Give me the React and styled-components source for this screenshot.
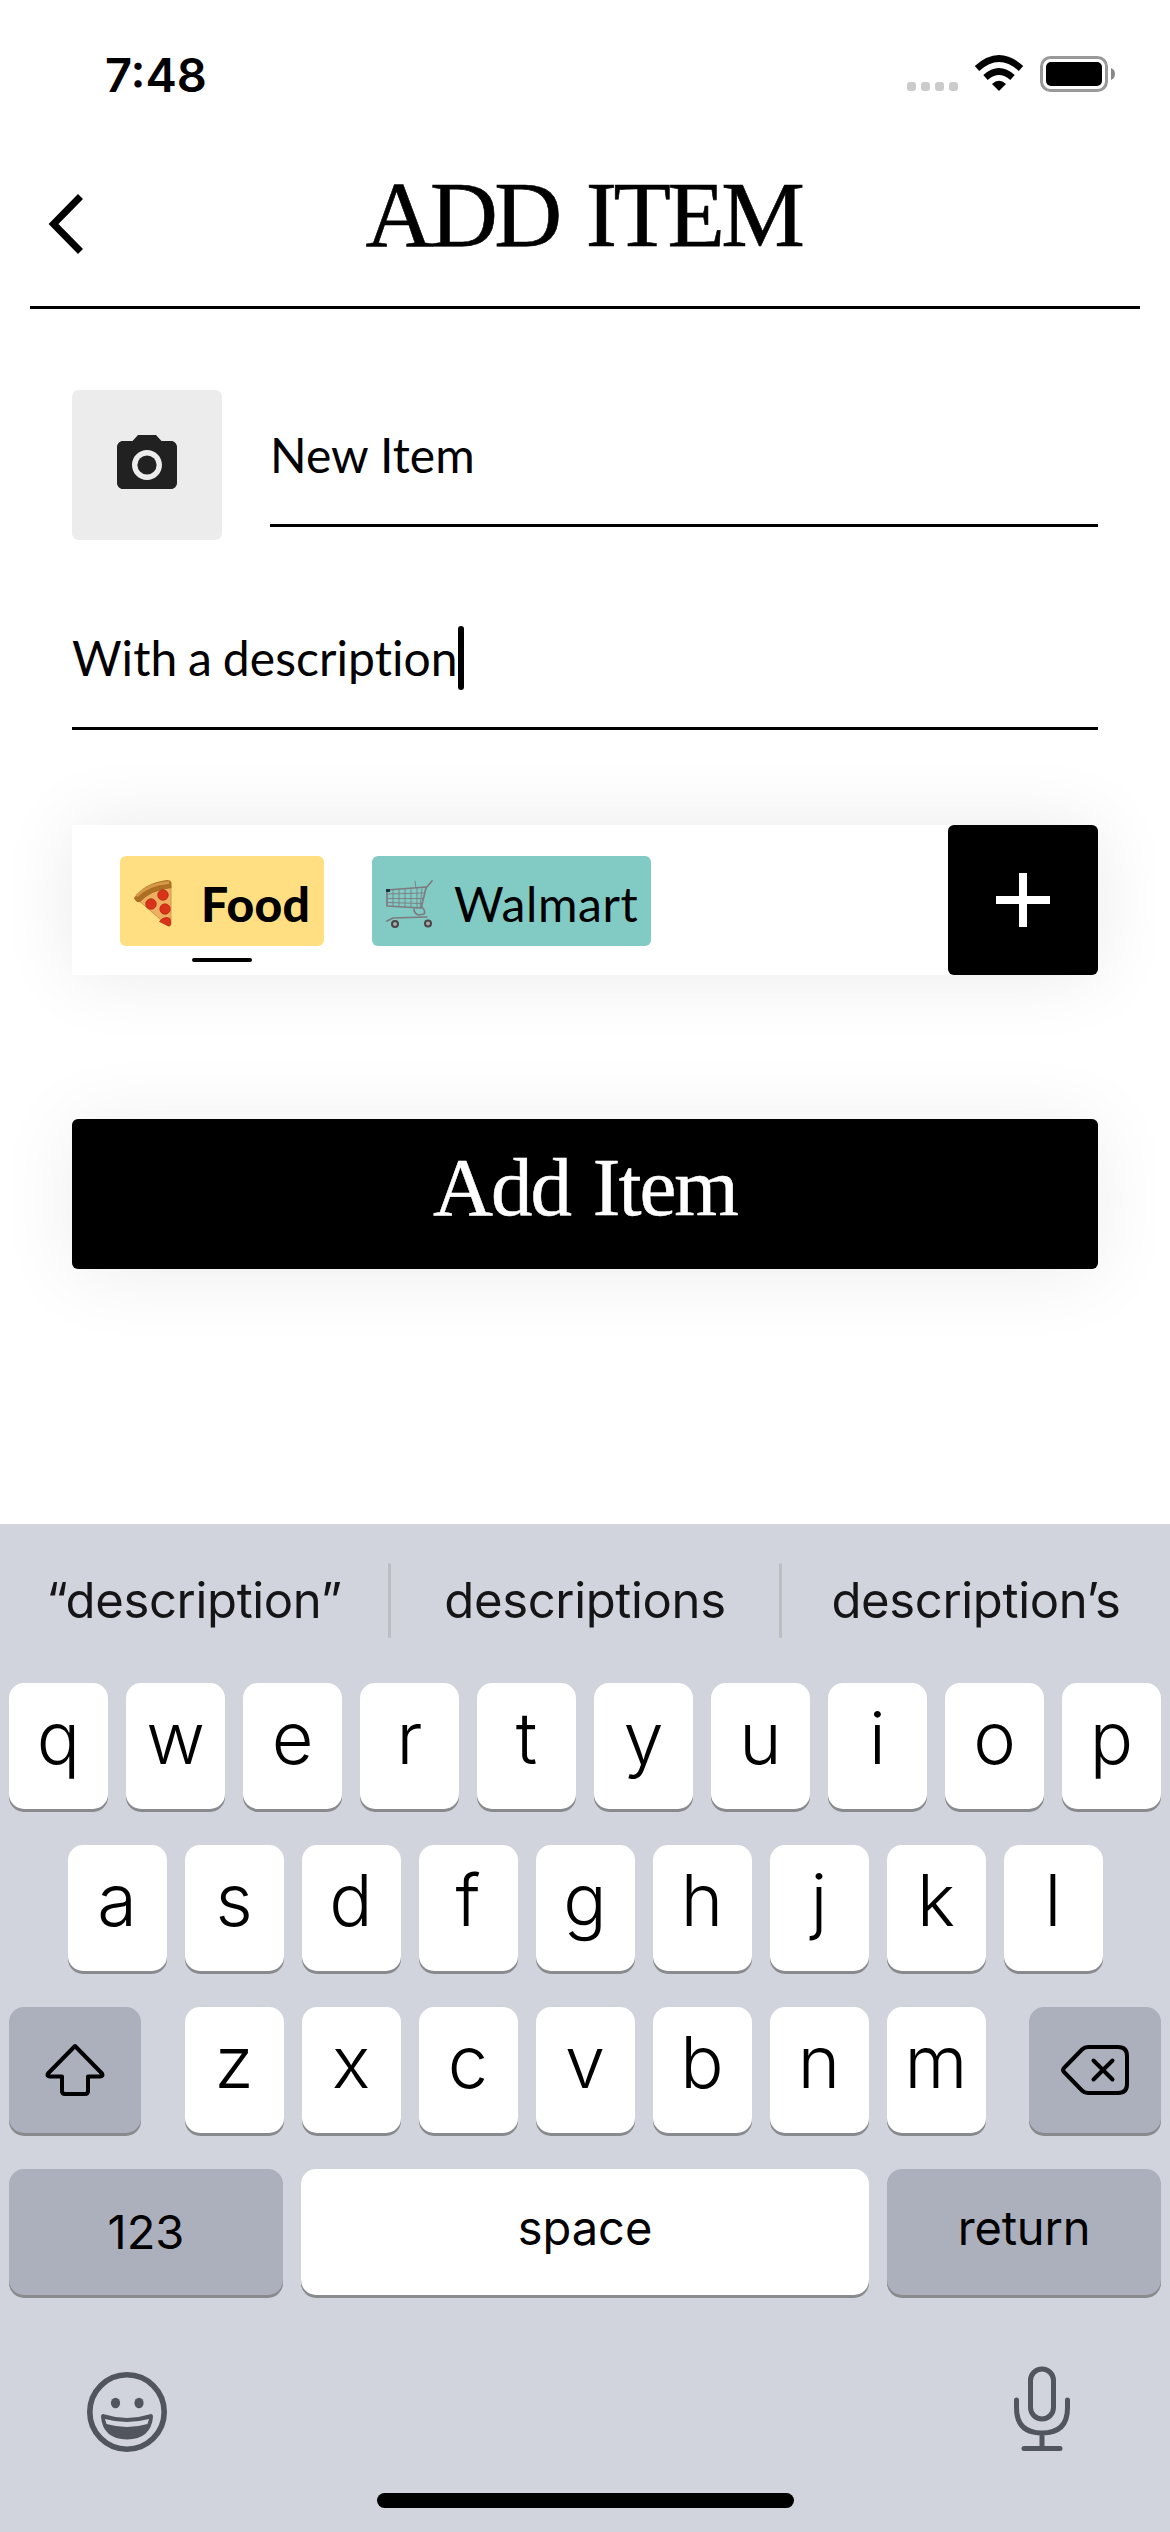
import React from "react";
import styled, { createGlobalStyle } from "styled-components";

const Global = createGlobalStyle`
  * { box-sizing: border-box; }
  body { margin: 0; background: #fff; }
`;

const Screen = styled.div`
  width: 1170px;
  height: 2532px;
  display: flex;
  flex-direction: column;
  overflow: hidden;
  background: #fff;
  color: #000;
  font-family: Inter, sans-serif;
`;

const StatusBar = styled.header`
  height: 147px;
  flex: none;
  display: flex;
  justify-content: space-between;
  padding: 55px 55px 0 105px;
`;

const Clock = styled.time`
  font-size: 47px;
  line-height: 40px;
  font-weight: 600;
  letter-spacing: 0;
`;

const StatusIcons = styled.svg`
  width: 208px;
  height: 40px;
  display: block;
`;

const TitleBar = styled.div`
  height: 162px;
  flex: none;
  margin: 0 30px;
  padding: 0 18px;
  display: grid;
  grid-template-columns: 36px 1fr 36px;
  border-bottom: 3px solid #000;
`;

const BackButton = styled.button`
  border: 0;
  padding: 0;
  margin: 46px 0 0;
  width: 36px;
  height: 62px;
  background: none;
  svg { display: block; }
`;

const Title = styled.h1`
  margin: 12px 3px 0 0;
  text-align: center;
  font-family: "Liberation Serif", serif;
  font-weight: 400;
  font-size: 94px;
  line-height: 110px;
  letter-spacing: -3.5px;
  word-spacing: 7px;
  white-space: nowrap;
  -webkit-text-stroke: 0.6px #000;
`;

const Form = styled.main`
  height: 1215px;
  flex: none;
  padding: 81px 72px 0;
  display: flex;
  flex-direction: column;
`;

const ItemRow = styled.div`
  display: flex;
  gap: 48px;
  height: 150px;
`;

const PhotoButton = styled.button`
  width: 150px;
  height: 150px;
  border: 0;
  padding: 0;
  border-radius: 7px;
  background: #ececec;
  display: flex;
  align-items: center;
  justify-content: center;
`;

const Field = styled.label`
  height: ${(p) => p.$height}px;
  flex: ${(p) => (p.$grow ? 1 : "none")};
  display: flex;
  align-items: flex-end;
  padding-bottom: 37px;
  border-bottom: 3px solid #000;
  font-family: Lato, sans-serif;
  font-size: 48px;
  line-height: 64px;
  font-variant-ligatures: none;
  letter-spacing: ${(p) => p.$tracking || 0}px;
  word-spacing: ${(p) => p.$wordGap || 0}px;
  white-space: pre;
`;

const Caret = styled.span`
  width: 6px;
  height: 64px;
  border-radius: 3px;
  background: #000;
`;

const CategoryBar = styled.section`
  margin-top: 95px;
  height: 150px;
  flex: none;
  display: flex;
  justify-content: space-between;
  background: #fff;
  box-shadow: 0 0 75px rgba(0, 0, 0, 0.085);
`;

const Tags = styled.div`
  display: flex;
  gap: 48px;
  padding: 31px 0 0 48px;
`;

const TagColumn = styled.div`
  display: flex;
  flex-direction: column;
  align-items: center;
  gap: 12px;
`;

const Tag = styled.div`
  width: ${(p) => p.$width}px;
  height: 90px;
  border-radius: 6px;
  background: ${(p) => p.$color};
  display: flex;
  align-items: center;
  padding: 6px 0 0 14px;
  gap: ${(p) => p.$gap}px;
  font-family: Lato, sans-serif;
  font-size: 48px;
  line-height: 60px;
  font-weight: ${(p) => (p.$active ? 900 : 400)};
  letter-spacing: ${(p) => p.$tracking || 0}px;
  svg { flex: none; }
`;

const ActiveMark = styled.span`
  width: 60px;
  height: 4px;
  border-radius: 2px;
  background: #000;
`;

const PlusButton = styled.button`
  width: 150px;
  height: 150px;
  border: 0;
  padding: 0;
  border-radius: 6px;
  background: #000;
  display: flex;
  align-items: center;
  justify-content: center;
`;

const SubmitButton = styled.button`
  margin-top: 144px;
  height: 150px;
  flex: none;
  border: 0;
  border-radius: 6px;
  padding: 0 0 15px;
  background: #000;
  color: #fff;
  box-shadow: 0 5px 80px rgba(0, 0, 0, 0.075);
  font-family: "Liberation Serif", serif;
  font-size: 83px;
  line-height: 96px;
  letter-spacing: -2px;
  word-spacing: 4px;
  -webkit-text-stroke: 0.5px #fff;
`;

const Keyboard = styled.section`
  flex: 1;
  background: #d1d4dc;
  display: flex;
  flex-direction: column;
`;

const Suggestions = styled.div`
  height: 159px;
  padding-top: 39px;
  flex: none;
  display: flex;
`;

const Suggestion = styled.div`
  flex: 1;
  height: 75px;
  font-size: 49px;
  line-height: 76px;
  letter-spacing: -0.35px;
  text-align: center;
  color: #151517;
`;

const Divider = styled.span`
  width: 3px;
  height: 75px;
  border-radius: 2px;
  background: #bcbdc2;
`;

const Keys = styled.div`
  display: flex;
  flex-direction: column;
  gap: 36px;
`;

const KeyRow = styled.div`
  display: flex;
  justify-content: center;
  gap: 18px;
  padding: 0 9px;
`;

const Key = styled.button`
  width: ${(p) => p.$width || 99}px;
  height: 126px;
  flex: none;
  border: 0;
  border-radius: 15px;
  padding: 0 0 ${(p) => p.$lift ?? 18}px;
  margin-left: ${(p) => p.$before || 0}px;
  background: ${(p) => (p.$dark ? "#abb0bc" : "#fff")};
  box-shadow: 0 3px 0 #898a8d;
  color: #000;
  display: flex;
  align-items: center;
  justify-content: center;
  font-family: Inter, sans-serif;
  font-weight: ${(p) => (p.$label ? 400 : 350)};
  font-size: ${(p) => (p.$label ? 47 : 72)}px;
  letter-spacing: ${(p) => p.$tracking || 0}px;
`;

const KeyboardFooter = styled.div`
  display: flex;
  justify-content: space-between;
  padding: 66px 96px 0 83px;
`;

const HomeIndicator = styled.div`
  width: 417px;
  height: 15px;
  border-radius: 8px;
  margin: auto auto 24px;
  background: #000;
`;

function StatusGlyphs() {
  return (
    <StatusIcons viewBox="907 55 208 40">
      {[907, 921, 935, 949].map((x) => (
        <rect key={x} x={x} y="82" width="9" height="9" rx="3" fill="#cbcbcb" />
      ))}
      <g fill="none" stroke="#000" strokeWidth="6.6">
        <path d="M977 68.5Q999 48.500 1021 68.500" />
        <path d="M985.500 77.500Q999 65.500 1012.500 77.500" />
      </g>
      <path d="M992 84Q999 77.500 1006 84L999 91Z" />
      <rect x="1041.500" y="57.500" width="65" height="33" rx="9" fill="none" stroke="#999" strokeWidth="3" />
      <rect x="1046" y="62" width="56" height="24" rx="5" />
      <path d="M1111 68q4 1.500 4 6t-4 6z" fill="#888" />
    </StatusIcons>
  );
}

function Pizza() {
  return (
    <svg width="38" height="48" viewBox="0 0 38 48">
      <path d="M4 20Q16 7 37 6V44q0 3-3 2Z" fill="#edb063" stroke="#c98a3c" strokeWidth="0.800" />
      <path d="M0 18Q10 3 33 0q4 0 4.500 3v5Q18 10 6 22 2 23 0 18Z" fill="#ad6f22" />
      <path d="M2.500 16Q14 4 35 2.500" fill="none" stroke="#d79a48" strokeWidth="3" />
      <g fill="#d9331a" stroke="#b5200f" strokeWidth="0.700">
        <circle cx="29" cy="15" r="5.300" />
        <circle cx="17" cy="24" r="5.300" />
        <circle cx="31" cy="29" r="5.200" />
        <path d="M25.500 41.500q3-4 7-4 4 0 4 3v4q-1 2-3 1Z" />
      </g>
    </svg>
  );
}

function Cart() {
  return (
    <svg width="48" height="48" viewBox="0 0 48 48" fill="none" stroke="#7d7b80" strokeLinecap="round" strokeLinejoin="round">
      <path d="M46 1l-6 7-5 20L1 26V10l39-3" strokeWidth="1.700" />
      <path d="M1 14l37-1M1 18.500h36M1 22.500l35 1M7 10v16M13 9v17M19 9v18M25 9v18M31 8v20M36 8l-2 20M29 1l1 7" strokeWidth="0.900" />
      <path d="M28 29q0 5 5 6l5-1q2-3-2-7M1 41l6-3 34-1" strokeWidth="1.700" />
      <rect x="0" y="9" width="4" height="3" fill="#1d3442" stroke="none" />
      <circle cx="9" cy="44" r="3" fill="#aaa" stroke="#4b4548" strokeWidth="2" />
      <circle cx="42" cy="43.500" r="3" fill="#aaa" stroke="#4b4548" strokeWidth="2" />
    </svg>
  );
}

export default function App() {
  return (
    <>
      <Global />
      <Screen>
        <StatusBar>
          <Clock>7:48</Clock>
          <StatusGlyphs />
        </StatusBar>
        <TitleBar>
          <BackButton aria-label="Back">
            <svg width="36" height="62" viewBox="0 0 36 62" fill="none" stroke="#000" strokeWidth="7">
              <path d="M32.500 3.500L5.500 31l27 27.500" />
            </svg>
          </BackButton>
          <Title>ADD ITEM</Title>
        </TitleBar>

        <Form>
          <ItemRow>
            <PhotoButton aria-label="Add photo">
              <svg width="72" height="72" viewBox="0 0 24 24" fill="#212121">
                <circle cx="12" cy="12" r="3.200" />
                <path d="M9 2L7.170 4H4c-1.100 0-2 .9-2 2v12c0 1.100.9 2 2 2h16c1.100 0 2-.9 2-2V6c0-1.100-.9-2-2-2h-3.170L15 2H9zm3 15c-2.760 0-5-2.240-5-5s2.240-5 5-5 5 2.240 5 5-2.240 5-5 5z" />
              </svg>
            </PhotoButton>
            <Field $grow $height={137}>New Item</Field>
          </ItemRow>
          <Field $height={190} $tracking={0.05} $wordGap={-1.5}>
            With a description
            <Caret />
          </Field>

          <CategoryBar>
            <Tags>
              <TagColumn>
                <Tag $color="#ffdf82" $width={204} $gap={29} $tracking={0.4} $active>
                  <Pizza />
                  Food
                </Tag>
                <ActiveMark />
              </TagColumn>
              <TagColumn>
                <Tag $color="#81cbc4" $width={279} $gap={20} $tracking={0.6}>
                  <Cart />
                  Walmart
                </Tag>
              </TagColumn>
            </Tags>
            <PlusButton aria-label="Add category">
              <svg width="54" height="54" viewBox="0 0 54 54" stroke="#fff" strokeWidth="8">
                <path d="M27 0v54M0 27h54" />
              </svg>
            </PlusButton>
          </CategoryBar>

          <SubmitButton>Add Item</SubmitButton>
        </Form>

        <Keyboard>
          <Suggestions>
            <Suggestion>“description”</Suggestion>
            <Divider />
            <Suggestion>descriptions</Suggestion>
            <Divider />
            <Suggestion>description’s</Suggestion>
          </Suggestions>
          <Keys>
            <KeyRow>
              {[..."qwertyuiop"].map((c) => <Key key={c}>{c}</Key>)}
            </KeyRow>
            <KeyRow>
              {[..."asdfghjkl"].map((c) => <Key key={c}>{c}</Key>)}
            </KeyRow>
            <KeyRow>
              <Key $dark $width={132} $lift={0} aria-label="Shift">
                <svg width="60" height="54" viewBox="0 0 60 54" fill="none" stroke="#000" strokeWidth="4" strokeLinejoin="round">
                  <path d="M30 3L3 30.500Q1.500 33.500 5 33.500H17V48q0 3 3 3H40q3 0 3-3V33.500H55Q58.500 33.500 57 30.500Z" />
                </svg>
              </Key>
              {[..."zxcvbnm"].map((c) => <Key key={c} $before={c === "z" ? 25.5 : 0}>{c}</Key>)}
              <Key $dark $width={132} $before={25.5} $lift={0} aria-label="Delete">
                <svg width="68" height="50" viewBox="0 0 68 50" fill="none" stroke="#000" strokeWidth="4" strokeLinecap="round" strokeLinejoin="round">
                  <path d="M3 23L21 4.500Q23.500 2 27 2H57q9 0 9 9V39q0 9-9 9H27q-3.500 0-6-2.500L3 27Q1 25 3 23Z" />
                  <path d="M32.500 15.500l19 19m0-19l-19 19" />
                </svg>
              </Key>
            </KeyRow>
            <KeyRow>
              <Key $dark $label $width={274} $lift={2}>123</Key>
              <Key $label $width={568} $lift={9}>space</Key>
              <Key $dark $label $width={274} $lift={9} $tracking={-0.2}>return</Key>
            </KeyRow>
          </Keys>
          <KeyboardFooter>
            <svg width="88" height="104" viewBox="83 2361 88 104" fill="none" stroke="#51555e">
              <circle cx="127" cy="2412" r="37.200" strokeWidth="5.600" />
              <g fill="#51555e" stroke="none">
                <ellipse cx="115.500" cy="2403" rx="4.600" ry="5.300" />
                <ellipse cx="139" cy="2403" rx="4.600" ry="5.300" />
                <path fillRule="evenodd" d="M101 2417q0-4 4-2.500 22 7 44 0 4-1.500 4 2.500-2 22-26 22.500-24-.5-26-22.500Zm4 2 1.500 5q20.500 6 41 0l1.500-5q-22 6-44 0Z" />
              </g>
            </svg>
            <svg width="62" height="92" viewBox="1012 2361 62 92" fill="none" stroke="#51555e" strokeWidth="5" strokeLinecap="round">
              <rect x="1030.500" y="2369" width="23" height="50" rx="11.500" />
              <path d="M1016.500 2400v8q0 25 25.500 25t25.500-25v-8M1042 2433v14M1024 2448.500h36" />
            </svg>
          </KeyboardFooter>
          <HomeIndicator />
        </Keyboard>
      </Screen>
    </>
  );
}
